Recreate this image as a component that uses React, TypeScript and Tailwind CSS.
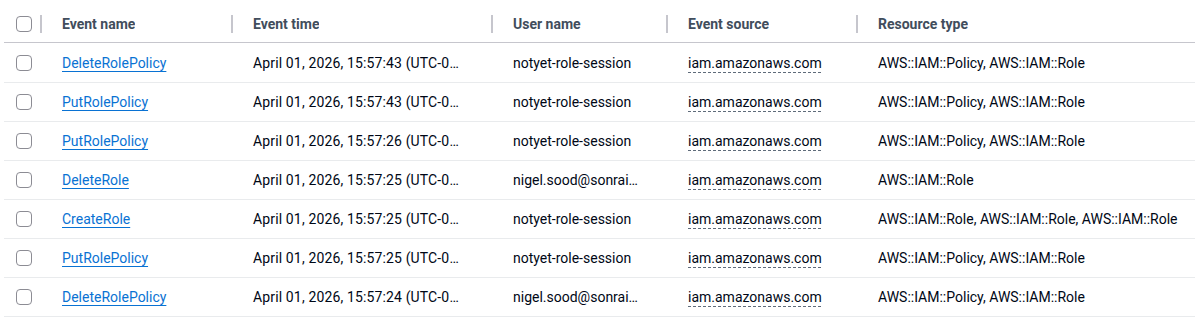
type Row = {
  name: string;
  time: string;
  user: string;
  source: string;
  resource: string;
};

const rows: Row[] = [
  { name: 'DeleteRolePolicy', time: 'April 01, 2026, 15:57:43 (UTC-04:00)', user: 'notyet-role-session', source: 'iam.amazonaws.com', resource: 'AWS::IAM::Policy, AWS::IAM::Role' },
  { name: 'PutRolePolicy', time: 'April 01, 2026, 15:57:43 (UTC-04:00)', user: 'notyet-role-session', source: 'iam.amazonaws.com', resource: 'AWS::IAM::Policy, AWS::IAM::Role' },
  { name: 'PutRolePolicy', time: 'April 01, 2026, 15:57:26 (UTC-04:00)', user: 'notyet-role-session', source: 'iam.amazonaws.com', resource: 'AWS::IAM::Policy, AWS::IAM::Role' },
  { name: 'DeleteRole', time: 'April 01, 2026, 15:57:25 (UTC-04:00)', user: 'nigel.sood@sonrai.com', source: 'iam.amazonaws.com', resource: 'AWS::IAM::Role' },
  { name: 'CreateRole', time: 'April 01, 2026, 15:57:25 (UTC-04:00)', user: 'notyet-role-session', source: 'iam.amazonaws.com', resource: 'AWS::IAM::Role, AWS::IAM::Role, AWS::IAM::Role' },
  { name: 'PutRolePolicy', time: 'April 01, 2026, 15:57:25 (UTC-04:00)', user: 'notyet-role-session', source: 'iam.amazonaws.com', resource: 'AWS::IAM::Policy, AWS::IAM::Role' },
  { name: 'DeleteRolePolicy', time: 'April 01, 2026, 15:57:24 (UTC-04:00)', user: 'nigel.sood@sonrai.com', source: 'iam.amazonaws.com', resource: 'AWS::IAM::Policy, AWS::IAM::Role' },
];

const cols = 'grid grid-cols-[37px_191px_260px_175px_190px_1fr]';

function Checkbox() {
  return <div className="w-4 h-4 rounded-[4px] border border-[#8c8c94] bg-white" />;
}

function HeaderCell({ label }: { label: string }) {
  return (
    <div className="flex items-center min-w-0">
      <div className="w-0.5 h-[18px] bg-[#c6c6cd] -ml-px" />
      <span className="ml-5 font-bold text-[#414d5c] truncate">{label}</span>
    </div>
  );
}

export default function App() {
  return (
    <div
      className="w-[1195px] h-[320px] bg-white pl-1 overflow-hidden text-[14px] text-[#000716]"
      style={{ fontFamily: 'Roboto, "Liberation Sans", sans-serif' }}
    >
      <div className={`${cols} h-[43px] pt-1.5 border-b border-[#c6c6cd]`}>
        <div className="flex items-center pl-3">
          <Checkbox />
        </div>
        <HeaderCell label="Event name" />
        <HeaderCell label="Event time" />
        <HeaderCell label="User name" />
        <HeaderCell label="Event source" />
        <HeaderCell label="Resource type" />
      </div>
      {rows.map((r, i) => (
        <div
          key={i}
          className={`${cols} ${i === 0 ? 'h-[40px] pt-px' : 'h-[39px]'} border-b border-[#e9ebed] items-center`}
        >
          <div className="flex items-center pl-3">
            <Checkbox />
          </div>
          <div className="pl-[21px] pr-5 truncate">
            <a href="#" className="text-[#0972d3] underline underline-offset-[3px] decoration-1">
              {r.name}
            </a>
          </div>
          <div className="pl-[21px] pr-[27px] truncate tracking-[0.01em]">{r.time}</div>
          <div className="pl-[21px] pr-[28px] truncate">{r.user}</div>
          <div className="pl-[21px] pr-5 truncate">
            <span className="underline decoration-dashed decoration-1 underline-offset-[4px] decoration-[#5f6b7a]">
              {r.source}
            </span>
          </div>
          <div className="pl-[21px] whitespace-nowrap">{r.resource}</div>
        </div>
      ))}
    </div>
  );
}
